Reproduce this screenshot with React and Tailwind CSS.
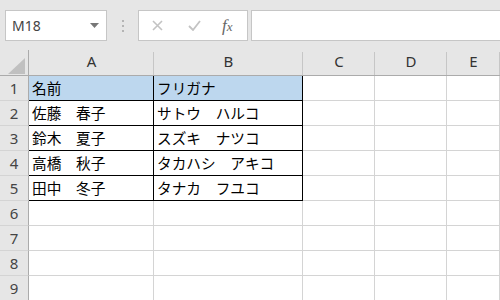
import React from "react";

const cols = [
  { k: "A", w: "w-[125px]" },
  { k: "B", w: "w-[149px]" },
  { k: "C", w: "w-[72px]" },
  { k: "D", w: "w-[72px]" },
  { k: "E", w: "flex-1" },
];

const data = [
  ["名前", "フリガナ"],
  ["佐藤　春子", "サトウ　ハルコ"],
  ["鈴木　夏子", "スズキ　ナツコ"],
  ["高橋　秋子", "タカハシ　アキコ"],
  ["田中　冬子", "タナカ　フユコ"],
];

const hdrFont = { fontFamily: '"Noto Sans", "Liberation Sans", sans-serif' };
const cellFont = { fontFamily: '"Noto Sans CJK JP", sans-serif' };

function Row({ n }) {
  const d = data[n - 1];
  return (
    <div className="flex h-[25px]">
      <div
        className="w-[29px] shrink-0 bg-[#e6e6e6] border-r border-r-[#ababab] border-b border-b-[#d4d4d4] flex items-center justify-center text-[15px] text-[#444]"
        style={hdrFont}
      >
        {n}
      </div>
      {cols.map((c, i) => {
        let cls = `${c.w} shrink-0 border-r border-b flex items-center pl-[3px] text-[14.67px] text-black whitespace-pre overflow-hidden`;
        if (d && i < 2) {
          cls += " border-b-black border-r-black";
          if (n === 1) cls += " bg-[#bdd7ee]";
        } else {
          cls += " border-r-[#d4d4d4] border-b-[#d4d4d4]";
        }
        return (
          <div key={c.k} className={cls} style={cellFont}>
            {d && i < 2 ? d[i] : ""}
          </div>
        );
      })}
    </div>
  );
}

export default function App() {
  return (
    <div className="w-[500px] h-[300px] overflow-hidden bg-white relative">
      <div className="h-[50px] bg-[#e6e6e6] flex items-start pt-[10px] pl-[5px]">
        <div className="w-[102px] h-[31px] bg-white border border-[#c6c6c6] flex items-center justify-between pl-[6px] pr-[7px]">
          <span className="text-[14px] text-[#444]" style={hdrFont}>M18</span>
          <svg width="9" height="5" viewBox="0 0 9 5">
            <path d="M0 0 L9 0 L4.5 5 Z" fill="#777" />
          </svg>
        </div>
        <div className="w-[31px] h-[31px] flex flex-col items-center justify-center gap-[3px]">
          <div className="w-[2px] h-[2px] bg-[#b4b4b4]" />
          <div className="w-[2px] h-[2px] bg-[#b4b4b4]" />
          <div className="w-[2px] h-[2px] bg-[#b4b4b4]" />
        </div>
        <div className="w-[110px] h-[31px] bg-white border border-[#c6c6c6] flex items-center">
          <svg className="ml-[13px]" width="11" height="11" viewBox="0 0 11 11">
            <path d="M1 1 L10 10 M10 1 L1 10" stroke="#c3c3c3" strokeWidth="1.6" />
          </svg>
          <svg className="ml-[25px]" width="13" height="11" viewBox="0 0 13 11">
            <path d="M1 6 L5 10 L12 1" stroke="#c3c3c3" strokeWidth="1.8" fill="none" />
          </svg>
          <span
            className="ml-[21px] text-[17px] leading-none italic text-[#666]"
            style={{ fontFamily: '"Liberation Serif", serif' }}
          >
            f<span className="text-[13px]">x</span>
          </span>
        </div>
        <div className="ml-[3px] flex-1 h-[31px] bg-white border border-[#c6c6c6] border-r-0" />
      </div>
      <div className="flex h-[26px] bg-[#e6e6e6] border-b border-b-[#ababab]">
        <div className="w-[29px] shrink-0 border-r border-r-[#ababab] relative">
          <svg className="absolute left-[8px] top-[8px]" width="17" height="16" viewBox="0 0 17 16">
            <path d="M17 0 L17 16 L0 16 Z" fill="#c0c0c0" />
          </svg>
        </div>
        {cols.map((c) => (
          <div
            key={c.k}
            className={`${c.w} shrink-0 flex items-end justify-center pb-[3px] text-[15px] text-[#333] relative`}
            style={hdrFont}
          >
            {c.k}
            <div className="absolute right-0 top-[2px] bottom-0 w-px bg-[#c6c6c6]" />
          </div>
        ))}
      </div>
      {[1, 2, 3, 4, 5, 6, 7, 8, 9].map((n) => (
        <Row key={n} n={n} />
      ))}
    </div>
  );
}
